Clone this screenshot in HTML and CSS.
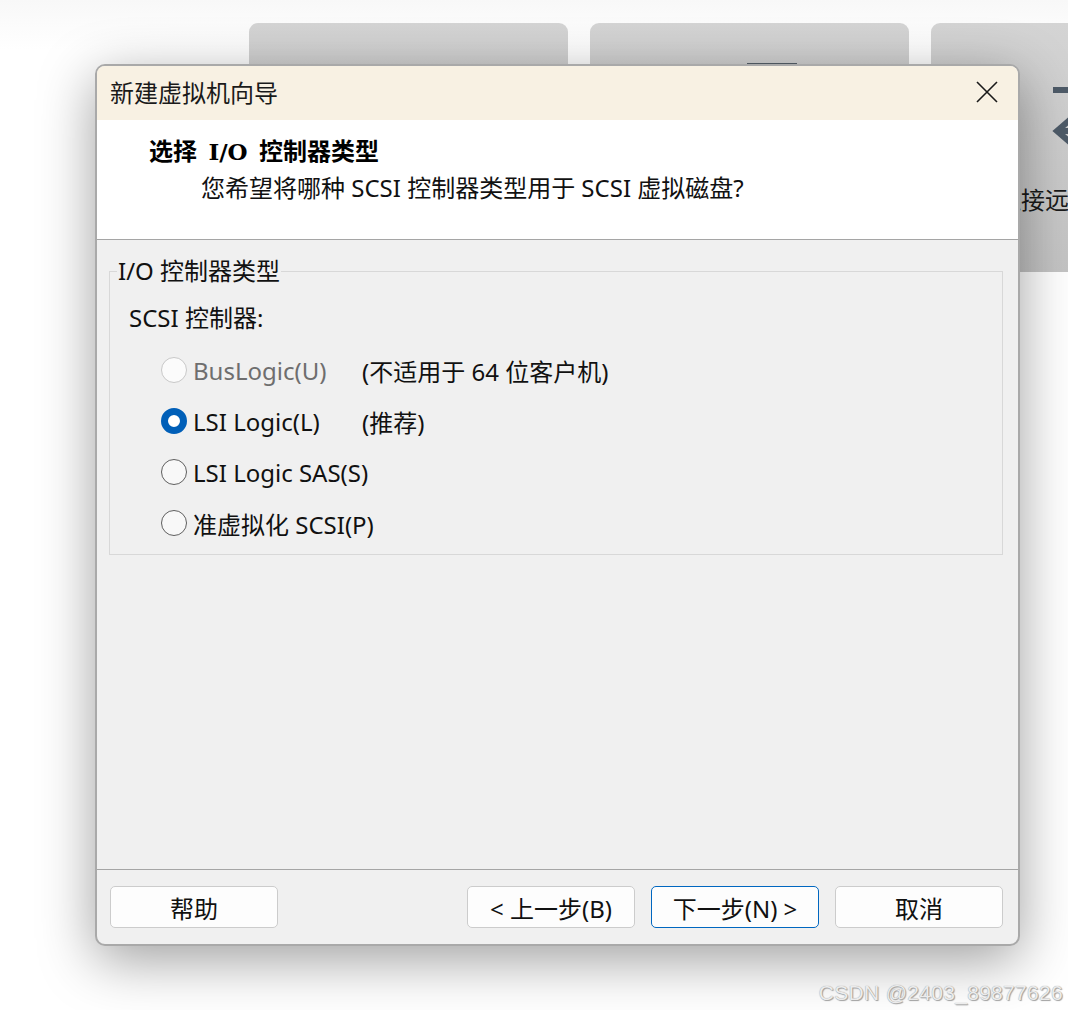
FILE: index.html
```html
<!DOCTYPE html>
<html lang="zh-CN">
<head>
<meta charset="utf-8">
<title>新建虚拟机向导</title>
<link rel="stylesheet" href="styles.css">
</head>
<body>
<div class="desktop">
  <div class="cards">
    <div class="card"></div>
    <div class="card"><span class="card-bar"></span></div>
    <div class="card card-last">
      <svg class="card-icon" width="40" height="70" viewBox="0 0 40 70">
        <rect x="4" y="4" width="36" height="6" fill="#4e5b68"/>
        <path d="M22 36 L8 48 L22 60" fill="none" stroke="#4e5b68" stroke-width="6"/>
        <rect x="10" y="45" width="30" height="6" fill="#4e5b68"/>
      </svg>
      <div class="card-text">连接远程服务器</div>
    </div>
  </div>
</div>

<div class="dialog">
  <div class="titlebar">
    <span class="title">新建虚拟机向导</span>
    <svg class="close" width="22" height="22" viewBox="0 0 22 22">
      <path d="M1 1 L21 21 M21 1 L1 21" stroke="#1a1a1a" stroke-width="1.6" fill="none"/>
    </svg>
  </div>
  <div class="header">
    <div class="h-title">选择 <b class="io">I/O</b> 控制器类型</div>
    <div class="h-sub">您希望将哪种 SCSI 控制器类型用于 SCSI 虚拟磁盘?</div>
  </div>
  <div class="body">
    <fieldset class="group">
      <legend class="legend">I/O 控制器类型</legend>
      <div class="label">SCSI 控制器:</div>
      <div class="options">
        <div class="opt disabled"><span class="radio"></span><span class="opt-text">BusLogic(U)</span><span class="note">(不适用于 64 位客户机)</span></div>
        <div class="opt"><span class="radio checked"></span><span class="opt-text">LSI Logic(L)</span><span class="note">(推荐)</span></div>
        <div class="opt"><span class="radio"></span><span class="opt-text">LSI Logic SAS(S)</span></div>
        <div class="opt"><span class="radio"></span><span class="opt-text">准虚拟化 SCSI(P)</span></div>
      </div>
    </fieldset>
  </div>
  <div class="footer">
    <button class="btn">帮助</button>
    <div class="spacer"></div>
    <button class="btn">&lt; 上一步(B)</button>
    <button class="btn primary">下一步(N) &gt;</button>
    <button class="btn">取消</button>
  </div>
</div>

<div class="watermark">CSDN @2403_89877626</div>
</body>
</html>
```

FILE: styles.css
```css
* { box-sizing: border-box; }

html, body {
  margin: 0;
  padding: 0;
}

body {
  width: 1068px;
  height: 1010px;
  overflow: hidden;
  position: relative;
  background: linear-gradient(#f8f8f8 0px, #ffffff 50px);
  font-family: "Noto Sans", "Noto Sans CJK SC", sans-serif;
  color: #111;
}

.desktop {
  padding: 23px 0 0 249px;
}

.cards {
  display: flex;
  gap: 22px;
}

.card {
  width: 319px;
  height: 249px;
  border-radius: 9px;
  background: linear-gradient(#d4d4d4, #c4c4c4);
  position: relative;
  flex: none;
}

.card-bar {
  position: absolute;
  left: 157px;
  top: 40px;
  width: 50px;
  height: 3px;
  background: #56606a;
}

.card-last {
  width: 200px;
  border-radius: 9px 0 0 9px;
}

.card-icon {
  position: absolute;
  left: 118px;
  top: 60px;
}

.card-text {
  position: absolute;
  left: 66px;
  top: 158px;
  font-size: 24px;
  font-family: "Noto Sans CJK SC", sans-serif;
  color: #1a1a1a;
  white-space: nowrap;
}

/* dialog */
.dialog {
  position: absolute;
  left: 95px;
  top: 64px;
  width: 925px;
  height: 882px;
  border: 2px solid #a9a9a9;
  border-radius: 10px;
  background: #f0f0f0;
  display: flex;
  flex-direction: column;
  overflow: hidden;
  box-shadow: 0 14px 55px rgba(0, 0, 0, 0.38);
}

.titlebar {
  height: 54px;
  background: #f8f1e3;
  display: flex;
  align-items: center;
  padding: 0 20px 4px 13px;
  flex: none;
}

.close {
  margin-top: 2px;
}

.title {
  flex: 1;
  font-family: "Noto Sans CJK SC", sans-serif;
  font-size: 24px;
  color: #1a1a1a;
}

.header {
  height: 120px;
  background: #ffffff;
  border-bottom: 1px solid #a5a5a5;
  padding: 12px 0 0 52px;
  flex: none;
}

.h-title {
  font-family: "Noto Sans CJK SC", sans-serif;
  font-size: 24px;
  font-weight: 700;
  line-height: 36px;
  color: #000;
  word-spacing: 6px;
}

.io {
  font-family: "DejaVu Serif", serif;
  font-weight: 700;
  font-size: 23px;
  word-spacing: 0;
}

.h-sub {
  font-family: "Noto Sans", "Noto Sans CJK SC", sans-serif;
  font-size: 24px;
  line-height: 36px;
  padding-left: 52px;
  color: #111;
}

.body {
  flex: 1;
  padding: 17px 15px 0 12px;
}

.group {
  margin: 0;
  height: 298px;
  border: 1px solid #d8d8d8;
  padding: 0 0 0 19px;
}

.legend {
  font-size: 24px;
  padding: 0 1px;
  margin-left: -12px;
  line-height: 28px;
  color: #111;
}

.label {
  font-size: 24px;
  line-height: 32px;
  margin-top: 17px;
  color: #111;
}

.options {
  display: flex;
  flex-direction: column;
  gap: 19px;
  margin-top: 20px;
  padding-left: 32px;
}

.opt {
  display: flex;
  align-items: center;
  height: 32px;
  font-size: 24px;
  color: #111;
}

.radio {
  width: 26px;
  height: 26px;
  border-radius: 50%;
  border: 1.5px solid #5f5f5f;
  background: #f8f8f8;
  flex: none;
  margin-right: 6px;
}

.radio.checked {
  border: 7px solid #005fb8;
  background: #ffffff;
}

.opt.disabled .radio {
  border-color: #c8c8c8;
  background: #fbfbfb;
}

.opt.disabled .opt-text {
  color: #6e6e6e;
}

.opt-text {
  width: 169px;
  white-space: nowrap;
}

.note {
  white-space: nowrap;
}

.footer {
  height: 75px;
  border-top: 1px solid #a5a5a5;
  display: flex;
  align-items: flex-start;
  padding: 16px 15px 0 13px;
  gap: 16px;
  flex: none;
}

.spacer {
  flex: 1;
}

.btn {
  width: 168px;
  height: 42px;
  border: 1px solid #cccccc;
  border-radius: 5px;
  background: #fdfdfd;
  font-family: "Noto Sans", "Noto Sans CJK SC", sans-serif;
  font-size: 24px;
  color: #111;
  padding: 0;
}

.btn.primary {
  border: 1.5px solid #0067c0;
}

.watermark {
  position: absolute;
  right: 5px;
  bottom: 5px;
  font-family: "Liberation Sans", sans-serif;
  font-size: 21px;
  color: #ececec;
  text-shadow: 0 0 1px #8a8a8a, 1px 1px 1px #a0a0a0;
  letter-spacing: 0.3px;
}
```
